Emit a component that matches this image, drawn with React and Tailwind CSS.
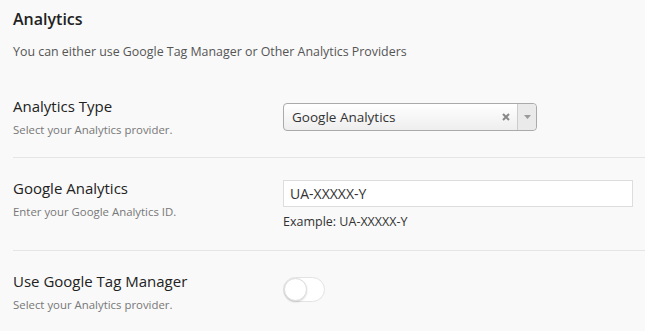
import React from "react";

function Row({ title, hint, children, last }) {
  return (
    <div className={`flex py-[20px] ${last ? "" : "border-b border-[#e5e5e5]"}`}>
      <div className="w-[270px] shrink-0">
        <div className="text-[15px] leading-[20px] text-[#222]">{title}</div>
        <div className="mt-[7px] text-[11.4px] leading-[14px] text-[#777]">{hint}</div>
      </div>
      <div className="flex-1 pr-[12px]">{children}</div>
    </div>
  );
}

export default function App() {
  return (
    <div
      className="w-[645px] h-[331px] overflow-hidden bg-[#f9f9f9] pl-[13px]"
      style={{ fontFamily: '"Open Sans", "Noto Sans", sans-serif' }}
    >
      <h2 className="pt-[7px] text-[16px] leading-[24px] font-semibold text-[#222]">Analytics</h2>
      <p className="mt-[12px] text-[12.4px] leading-[18px] text-[#555]">
        You can either use Google Tag Manager or Other Analytics Providers
      </p>

      <div className="mt-[15px]">
        <Row title="Analytics Type" hint="Select your Analytics provider.">
          <div className="mt-[7px] flex h-[28px] w-[254px] items-stretch rounded-[4px] border border-[#aaa] bg-gradient-to-b from-white to-[#eee] text-[13.5px] text-[#333]">
            <span className="flex-1 pl-[8px] leading-[26px]">Google Analytics</span>
            <span className="flex w-[22px] items-center justify-center">
              <svg width="8" height="8" viewBox="0 0 8 8">
                <path d="M1 1l6 6M7 1L1 7" stroke="#888" strokeWidth="2" />
              </svg>
            </span>
            <span className="flex w-[19px] items-center justify-center border-l border-[#ccc] bg-[#eaeaea] rounded-r-[4px]">
              <svg width="7" height="4" viewBox="0 0 7 4"><path d="M0 0h7L3.5 4z" fill="#999" /></svg>
            </span>
          </div>
        </Row>

        <Row title="Google Analytics" hint="Enter your Google Analytics ID.">
          <div className="mt-[2px] h-[27px] w-[350px] border border-[#ddd] bg-white px-[6px] text-[14px] leading-[25px] text-[#333]">
            UA-XXXXX-Y
          </div>
          <div className="mt-[7px] text-[12.5px] leading-[16px] text-[#333]">Example: UA-XXXXX-Y</div>
        </Row>

        <Row title="Use Google Tag Manager" hint="Select your Analytics provider." last>
          <div className="mt-[6px] relative h-[25px] w-[42px] rounded-full border border-[#e3e3e3] bg-white">
            <div className="absolute left-0 top-0 h-[23px] w-[23px] rounded-full border border-[#ddd] bg-white shadow-[0_1px_2px_rgba(0,0,0,0.15)]"></div>
          </div>
        </Row>
      </div>
    </div>
  );
}
